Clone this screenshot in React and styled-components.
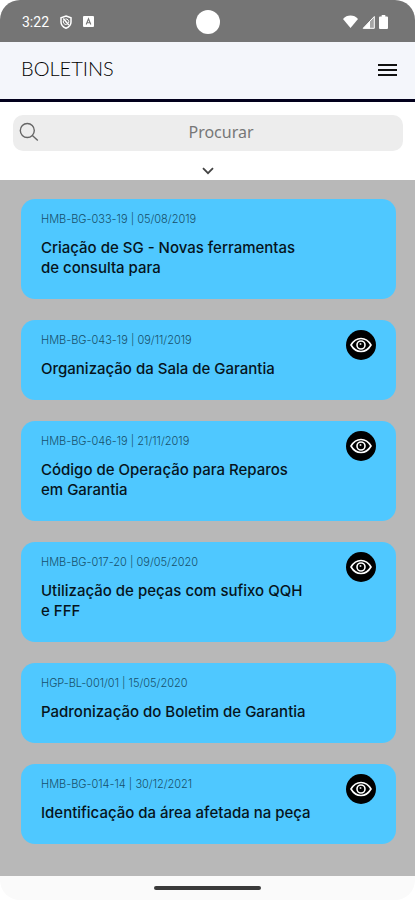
import React, { Component } from 'react';
import styled, { createGlobalStyle } from 'styled-components'

const gray = '#757575'
const lightGray = '#b8b8b8'
const blue = '#4fc8ff'
const navy = '#02001c'

const GlobalStyle = createGlobalStyle`
    * {
        box-sizing: border-box;
    }

    body {
        margin: 0;
        background-color: white;
        font-family: Inter, "Liberation Sans", sans-serif;
    }
`

const Screen = styled.div`
    display: flex;
    flex-direction: column;

    min-height: 100vh;
    overflow: hidden;
    border-radius: 20px;
`

const StatusBar = styled.div`
    display: grid;
    grid-template-columns: 1fr auto 1fr;
    align-items: center;

    height: 42px;
    padding: 1px 22px 0;

    color: white;
    background-color: ${gray};
`

const StatusGroup = styled.div`
    display: flex;
    align-items: center;
    justify-content: ${props => props.$end ? 'flex-end' : 'flex-start'};
    gap: ${props => props.$end ? '4px' : '11px'};
    padding-right: ${props => props.$end ? '5px' : '0'};
`

const Time = styled.span`
    font-family: Roboto, sans-serif;
    font-size: 14px;
    line-height: 20px;
`

const Camera = styled.div`
    width: 24px;
    height: 24px;
    border-radius: 50%;
    background-color: white;
`

const Header = styled.header`
    display: flex;
    align-items: center;
    justify-content: space-between;

    height: 60px;
    padding: 0 18px 2px 21px;

    border-bottom: 3px solid ${navy};
    background-color: #f4f6fb;
`

const Heading = styled.h1`
    margin: 0;
    padding-bottom: 4px;

    color: #000;
    font-family: Lato, sans-serif;
    font-size: 20px;
    font-weight: 300;
    line-height: 24px;
`

const IconButton = styled.button`
    display: flex;
    align-items: center;
    justify-content: center;

    padding: 0;
    border: none;

    color: #111;
    background: none;
    cursor: pointer;
`

const SearchArea = styled.div`
    display: flex;
    flex-direction: column;
    align-items: center;
    gap: 16px;

    padding: 13px 12px 5px 13px;
`

const SearchBox = styled.label`
    display: flex;
    align-items: center;

    width: 100%;
    height: 36px;
    padding: 0 0 2px 6px;

    border-radius: 10px;
    background-color: #ededed;
`

const SearchInput = styled.input`
    flex: 1;
    min-width: 0;
    padding: 0;
    border: none;
    outline: none;

    color: #333;
    background: none;
    text-align: center;
    font-family: "Noto Sans", sans-serif;
    font-size: 16px;
    line-height: 20px;

    &::placeholder {
        color: #777;
        opacity: 1;
    }
`

const List = styled.main`
    display: flex;
    flex: 1;
    flex-direction: column;
    gap: 21px;

    padding: 19px 19px 19px 21px;

    background-color: ${lightGray};
`

const Card = styled.article`
    display: flex;
    justify-content: space-between;

    padding: 10px 20px 21px;

    border-radius: 14px;
    background-color: ${blue};
`

const CardText = styled.div`
    flex: 1;
    max-width: 270px;
`

const Info = styled.p`
    margin: 0 0 9px;

    color: #17506b;
    font-size: 11px;
    font-weight: 300;
    line-height: 20px;
`

const Title = styled.h2`
    margin: 0;

    color: #06141c;
    font-size: 15px;
    font-weight: 500;
    line-height: 20px;
`

const ViewButton = styled(IconButton)`
    width: 30px;
    height: 30px;
    border-radius: 50%;

    color: white;
    background-color: black;
`

const NavBar = styled.footer`
    display: flex;
    justify-content: center;

    height: 24px;
    padding-top: 10px;

    background-color: #fafafa;
`

const NavHandle = styled.div`
    width: 26%;
    height: 4px;
    border-radius: 2px;
    background-color: #3a3a3a;
`

const ShieldIcon = () => (
    <svg width="12" height="14" viewBox="0 0 12 14" fill="none" stroke="currentColor" strokeWidth="1.5">
        <path d="M6 1 11 2.8V7c0 2.8-2 5-5 6.2C3 12 1 9.8 1 7V2.8Z"/>
        <path d="M3.3 3.6 8.8 10"/>
        <path d="M5.5 3.9a2.9 2.9 0 0 1 3 4M3.5 5.5a2.9 2.9 0 0 0 3.2 4" strokeWidth="1"/>
    </svg>
)

const KeyboardIcon = () => (
    <svg width="11" height="11" viewBox="0 0 11 11">
        <rect width="11" height="11" rx="1" fill="currentColor"/>
        <path d="M3.2 8.5 5.5 2.8l2.3 5.7M4 6.7h3" fill="none" stroke={gray} strokeWidth="1.1"/>
    </svg>
)

const WifiIcon = () => (
    <svg width="15" height="13" viewBox="0 0 15 13" fill="currentColor">
        <path d="M7.5 13 0 4C2 1.6 4.6 .5 7.5 .5S13 1.6 15 4Z"/>
    </svg>
)

const SignalIcon = () => (
    <svg width="13" height="14" viewBox="0 0 13 14">
        <path d="M12.3 1.5v11.8H1.2Z" fill="currentColor" fillOpacity=".35" stroke="currentColor"/>
        <path d="M8 6.3V13.5H1Z" fill="currentColor"/>
    </svg>
)

const BatteryIcon = () => (
    <svg width="9" height="14" viewBox="0 0 9 14" fill="currentColor">
        <path d="M2.7 0h3.6v1.5H8a1 1 0 0 1 1 1V13a1 1 0 0 1-1 1H1a1 1 0 0 1-1-1V2.5a1 1 0 0 1 1-1h1.7Z"/>
    </svg>
)

const MenuIcon = () => (
    <svg width="19" height="14" viewBox="0 0 19 14" fill="currentColor">
        <path d="M0 1h19v2H0zM0 6h19v2H0zM0 11h19v2H0z"/>
    </svg>
)

const SearchIcon = () => (
    <svg width="20" height="20" viewBox="0 0 20 20" fill="none" stroke="#666" strokeWidth="1.4">
        <circle cx="8.3" cy="8.5" r="7"/>
        <path d="m13.4 13.6 5.4 5"/>
    </svg>
)

const ChevronIcon = () => (
    <svg width="12" height="8" viewBox="0 0 12 8" fill="none" stroke="#444" strokeWidth="1.8">
        <path d="m1 1.2 5 5 5-5"/>
    </svg>
)

const EyeIcon = () => (
    <svg width="22" height="16" viewBox="0 0 22 16" fill="none" stroke="currentColor" strokeWidth="1.6">
        <path d="M1 8C3.5 3.7 7 1.5 11 1.5S18.5 3.7 21 8c-2.5 4.3-6 6.5-10 6.5S3.5 12.3 1 8Z"/>
        <circle cx="11" cy="8" r="4"/>
        <path d="M10.5 6.2v1.6"/>
    </svg>
)

const bulletins = [
    { code: 'HMB-BG-033-19', date: '05/08/2019', title: 'Criação de SG - Novas ferramentas de consulta para' },
    { code: 'HMB-BG-043-19', date: '09/11/2019', title: 'Organização da Sala de Garantia', viewed: true },
    { code: 'HMB-BG-046-19', date: '21/11/2019', title: 'Código de Operação para Reparos em Garantia', viewed: true },
    { code: 'HMB-BG-017-20', date: '09/05/2020', title: 'Utilização de peças com sufixo QQH e FFF', viewed: true },
    { code: 'HGP-BL-001/01', date: '15/05/2020', title: 'Padronização do Boletim de Garantia' },
    { code: 'HMB-BG-014-14', date: '30/12/2021', title: 'Identificação da área afetada na peça', viewed: true },
]

export default class App extends Component {

    state = {
        search: ''
    }

    render() {

        const { search } = this.state
        const visible = bulletins.filter(({ code, title }) =>
            `${code} ${title}`.toLowerCase().includes(search.toLowerCase()))

        return (
            <Screen>
                <GlobalStyle />

                <StatusBar>
                    <StatusGroup>
                        <Time>3:22</Time>
                        <ShieldIcon />
                        <KeyboardIcon />
                    </StatusGroup>
                    <Camera />
                    <StatusGroup $end>
                        <WifiIcon />
                        <SignalIcon />
                        <BatteryIcon />
                    </StatusGroup>
                </StatusBar>

                <Header>
                    <Heading>BOLETINS</Heading>
                    <IconButton type="button" aria-label="Menu"><MenuIcon /></IconButton>
                </Header>

                <SearchArea>
                    <SearchBox>
                        <SearchIcon />
                        <SearchInput
                            type="text"
                            placeholder="Procurar"
                            aria-label="Procurar"
                            value={search}
                            onChange={e => this.setState({ search: e.target.value })}
                        />
                    </SearchBox>
                    <IconButton type="button" aria-label="Mais filtros"><ChevronIcon /></IconButton>
                </SearchArea>

                <List>
                    {visible.map(({ code, date, title, viewed }) => (
                        <Card key={code}>
                            <CardText>
                                <Info>{code} | {date}</Info>
                                <Title>{title}</Title>
                            </CardText>
                            {viewed &&
                                <ViewButton type="button" aria-label={`Ver ${code}`}><EyeIcon /></ViewButton>
                            }
                        </Card>
                    ))}
                </List>

                <NavBar>
                    <NavHandle />
                </NavBar>
            </Screen>
        )
    }
}
